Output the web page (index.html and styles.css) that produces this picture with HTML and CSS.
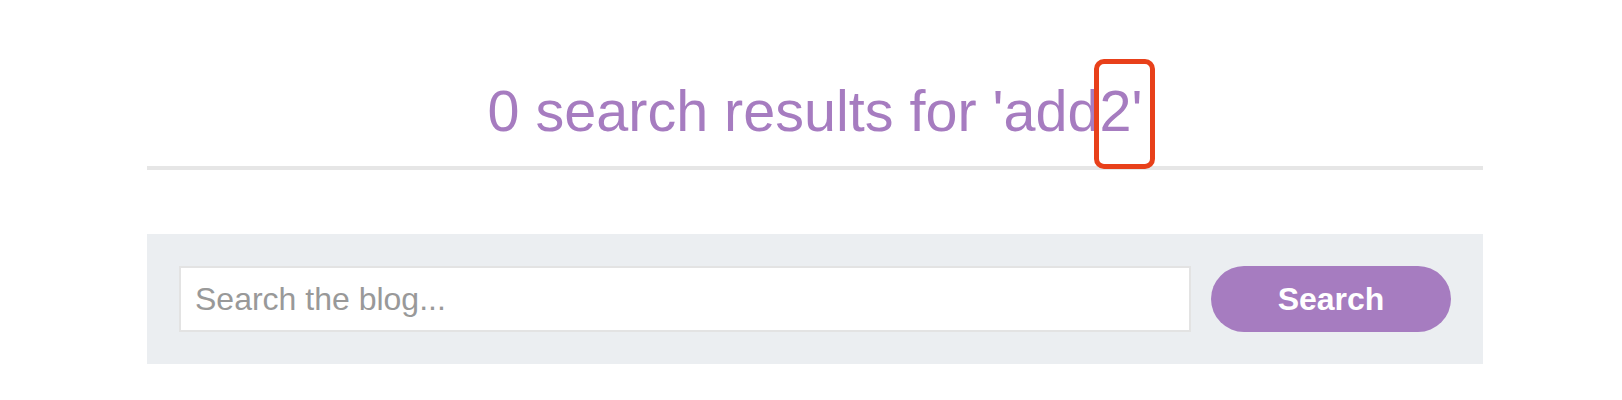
FILE: index.html
```html
<!DOCTYPE html>
<html lang="en">
<head>
<meta charset="utf-8">
<title>Search results</title>
<link rel="stylesheet" href="styles.css">
</head>
<body>
<main class="page">
  <section class="results-header">
    <h1 class="results-title">0 search results for 'add<span class="highlight">2'</span></h1>
  </section>
  <form class="search-panel" onsubmit="return false">
    <input class="search-input" type="text" placeholder="Search the blog...">
    <button class="search-button" type="submit">Search</button>
  </form>
</main>
</body>
</html>
```

FILE: styles.css
```css
html, body {
  margin: 0;
  padding: 0;
  background: #ffffff;
}

body {
  font-family: "Liberation Sans", Arial, Helvetica, sans-serif;
}

.page {
  margin: 0 139px 0 147px;
  padding-top: 79px;
}

.results-header {
  border-bottom: 4px solid #e6e6e6;
  padding-bottom: 23px;
}

.results-title {
  margin: 0;
  text-align: center;
  font-size: 57.5px;
  line-height: 64px;
  font-weight: 400;
  color: #a67cc0;
}

.highlight {
  position: relative;
}

.highlight::after {
  content: "";
  position: absolute;
  left: -5px;
  right: -13px;
  top: -20px;
  bottom: -26px;
  border: 5px solid #e8401a;
  border-radius: 10px;
}

.search-panel {
  margin-top: 64px;
  display: flex;
  align-items: center;
  gap: 20px;
  padding: 32px;
  background: #ebeef1;
}

.search-input {
  flex: 1;
  box-sizing: border-box;
  height: 66px;
  margin: 0;
  padding: 0 14px;
  border: 2px solid #e3e3e3;
  background: #ffffff;
  font-family: "Liberation Sans", Arial, Helvetica, sans-serif;
  font-size: 32px;
  color: #333333;
  outline: none;
}

.search-input::placeholder {
  color: #999999;
}

.search-button {
  box-sizing: border-box;
  width: 240px;
  height: 66px;
  margin: 0;
  border: 0;
  border-radius: 33px;
  background: #a67cc0;
  color: #ffffff;
  font-family: "Liberation Sans", Arial, Helvetica, sans-serif;
  font-size: 32px;
  font-weight: 700;
  cursor: pointer;
}
```
